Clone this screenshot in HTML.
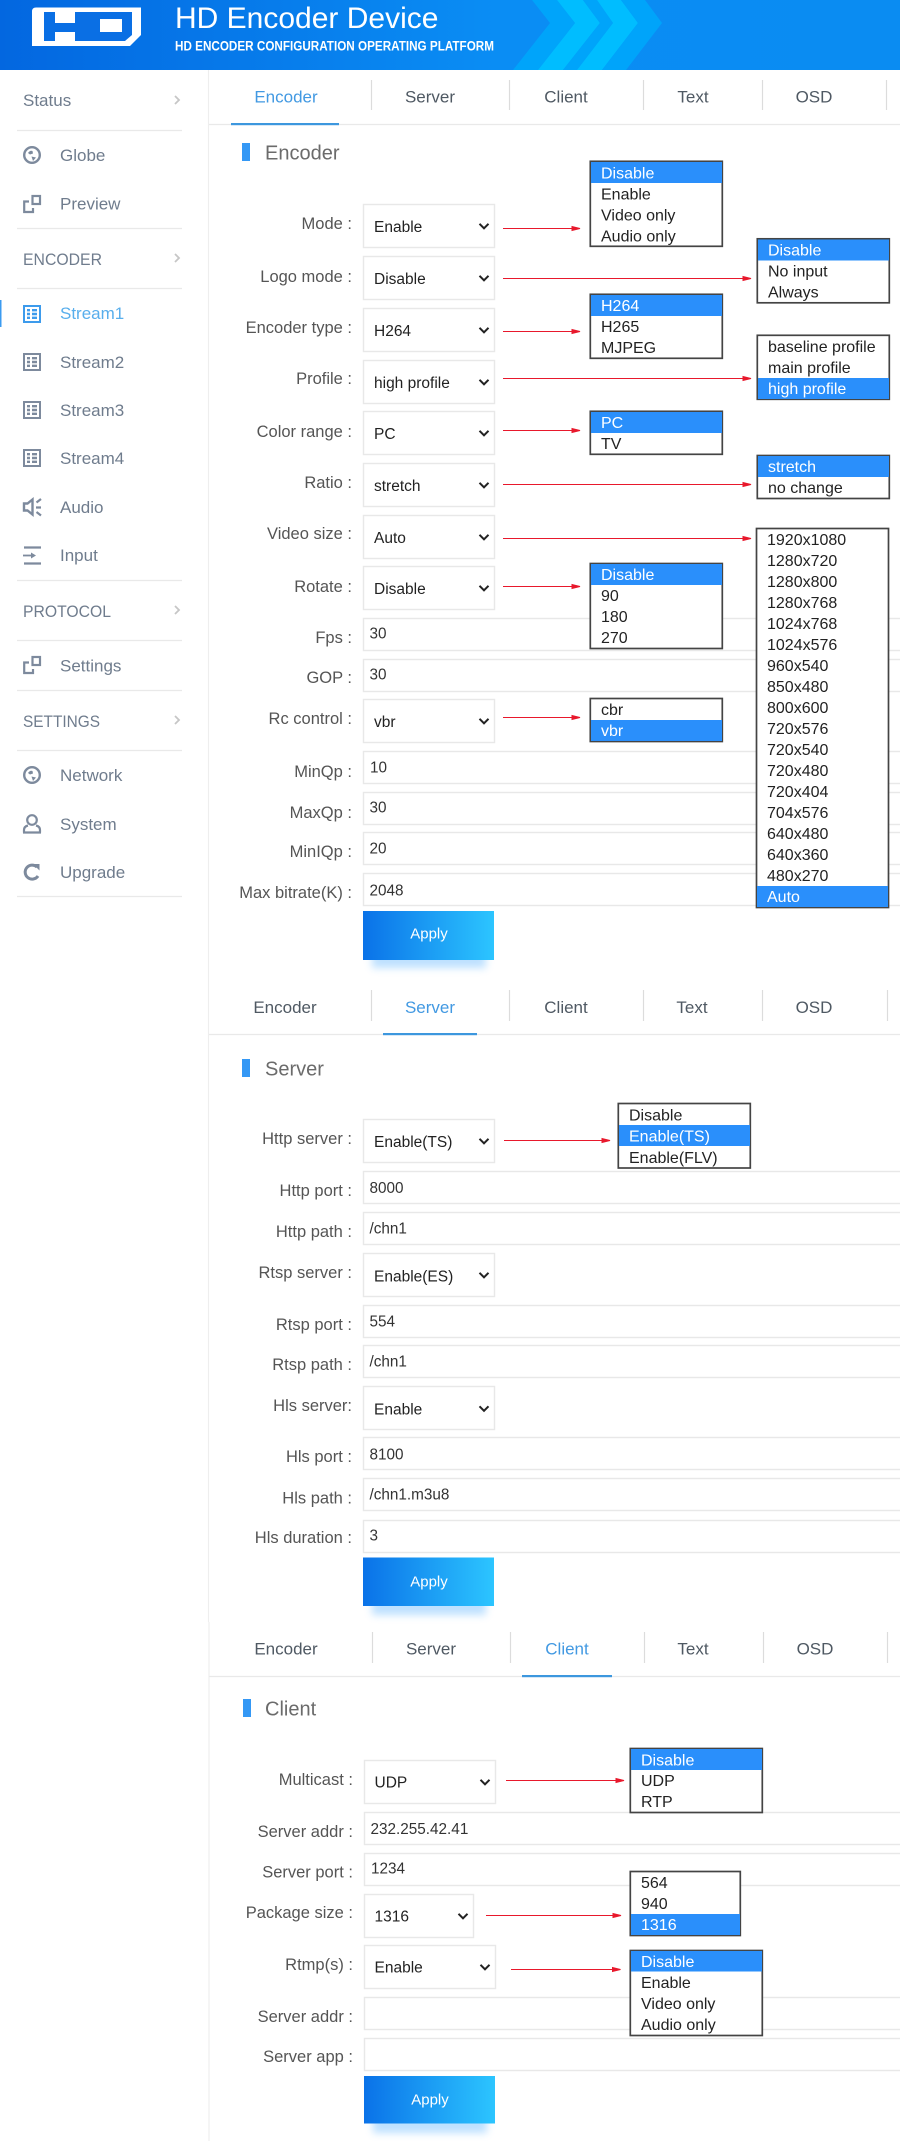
<!DOCTYPE html>
<html lang="en"><head><meta charset="utf-8"><title>HD Encoder Device</title>
<style>
html,body{margin:0;padding:0;background:#fff}
svg{display:block}
text{font-family:"Liberation Sans",Arial,sans-serif}
.s{font-size:17px;fill:#6f7c8d}
.a{font-size:17px;fill:#58aeec}
.tab{font-size:17px;fill:#4f5963;text-anchor:middle}
.tabA{font-size:17px;fill:#4299e2;text-anchor:middle}
.h{font-size:20px;fill:#6b6b6b}
.l{font-size:16.5px;fill:#555;text-anchor:end}
.v{font-size:15.5px;fill:#222}
.i{font-size:15.3px;fill:#333}
.d{font-size:16px;fill:#222}
.w{font-size:16px;fill:#fff}
.ap{font-size:15px;fill:#fff;text-anchor:middle}
.sel{fill:#fff;stroke:#e8e8e8;stroke-width:1.4}
.dd{fill:#fff;stroke:#444;stroke-width:1.7}
.hl{fill:#2a8ffb}
.ar{fill:#e8182c;stroke:#e8182c;stroke-width:1}
.ln{stroke:#e9e9e9;stroke-width:1.2}
.sp{stroke:#dcdcdc;stroke-width:1.2}
</style></head><body>
<svg xmlns="http://www.w3.org/2000/svg" width="900" height="2141" viewBox="0 0 900 2141">
<defs>
<linearGradient id="hd" x1="0" x2="1" y1="0" y2="0"><stop offset="0" stop-color="#0367e0"/><stop offset=".55" stop-color="#0a8df4"/><stop offset="1" stop-color="#0a8cf2"/></linearGradient>
<linearGradient id="bt" x1="0" x2="1" y1="0" y2="0"><stop offset="0" stop-color="#0a72e8"/><stop offset="1" stop-color="#2cc5ff"/></linearGradient>
<filter id="bl" x="-30%" y="-100%" width="160%" height="300%"><feGaussianBlur stdDeviation="4"/></filter>
<path id="c" d="M-4.5-2.2 0 2.3 4.5-2.2" fill="none" stroke="#222" stroke-width="2"/>
<path id="m" d="M-2-4 2 0-2 4" fill="none" stroke="#c6c6c6" stroke-width="1.8"/>
<g id="st"><rect x="0" y="0" width="18" height="18" fill="currentColor"/><rect x="2" y="2" width="14" height="14" fill="#fff"/>
<path d="M4 4h3v2.400H4zM4 7.800h3v2.400H4zM4 11.600h3V14H4zM9 4h5v2.400H9zM9 7.800h5v2.400H9zM9 11.600h5V14H9z" fill="currentColor"/></g>
<g id="gl"><circle cx="9" cy="9" r="7.800" fill="none" stroke="#7d8a9d" stroke-width="2.400"/><path d="M5 7q2-3 4.500-2l.5 2.500-3 1zM8.500 10.500l4.500 1-3 3.500z" fill="#7d8a9d"/></g>
<g id="pv" fill="none" stroke="#7d8a9d" stroke-width="2.200"><rect x="9.500" y="1" width="7.500" height="8"/><path d="M6 6.500H1.200V17H10v-4"/></g>
</defs>

<!-- header -->
<rect width="900" height="70" fill="url(#hd)"/>
<path d="M532 0H557L575 23 538 70H513L550 23z" fill="#00a4fa"/>
<path d="M557 0H583L600 23 563 70H538L575 23z" fill="#00bdff"/>
<path d="M583 0H597L613 23 577 70H563L600 23z" fill="#00a4fa"/>
<path d="M597 0H621L638 23 602 70H577L613 23z" fill="#00bdff"/>
<path d="M621 0H645L662 23 626 70H602L638 23z" fill="#00a4fa"/>
<path d="M36 7.500H141V35L130 46H32V11.500Q32 7.500 36 7.500z" fill="#fff"/>
<path fill="#0a6fe4" fill-rule="evenodd" d="M44 12H55V23H75V12H132V35L125 41H75V32H55V41H44zM100 19V32H122V19z"/>
<text x="175" y="28" font-size="30" fill="#fff">HD Encoder Device</text>
<text x="175" y="50.500" font-size="13.500" font-weight="bold" fill="#fff" textLength="319" lengthAdjust="spacingAndGlyphs">HD ENCODER CONFIGURATION OPERATING PLATFORM</text>

<!-- sidebar -->
<path d="M208.500 70V1622M209 1622V2141" stroke="#eee" stroke-width="1.200"/>
<rect x="0" y="300" width="1.500" height="27" fill="#3b9bf0"/>
<path class="ln" d="M17 130.500H182M17 228.500H182M17 288.500H182M17 580.500H182M17 640.500H182M17 690.500H182M17 750.500H182M17 896.500H182"/>
<text class="s" x="23" y="106">Status</text>
<text class="s" x="60" y="161">Globe</text>
<text class="s" x="60" y="209.500">Preview</text>
<text class="s" x="23" y="265" textLength="79" lengthAdjust="spacingAndGlyphs">ENCODER</text>
<text class="a" x="60" y="319">Stream1</text>
<text class="s" x="60" y="368">Stream2</text>
<text class="s" x="60" y="416">Stream3</text>
<text class="s" x="60" y="464">Stream4</text>
<text class="s" x="60" y="513">Audio</text>
<text class="s" x="60" y="561">Input</text>
<text class="s" x="23" y="617" textLength="88" lengthAdjust="spacingAndGlyphs">PROTOCOL</text>
<text class="s" x="60" y="671.500">Settings</text>
<text class="s" x="23" y="727" textLength="77" lengthAdjust="spacingAndGlyphs">SETTINGS</text>
<text class="s" x="60" y="781">Network</text>
<text class="s" x="60" y="830">System</text>
<text class="s" x="60" y="878">Upgrade</text>
<use href="#m" x="177" y="100"/><use href="#m" x="177" y="258"/><use href="#m" x="177" y="610"/><use href="#m" x="177" y="720"/>
<use href="#gl" x="23" y="146"/>
<use href="#pv" x="23" y="195"/>
<use href="#st" x="23" y="305" color="#3d9bec"/>
<use href="#st" x="23" y="353" color="#7d8a9d"/>
<use href="#st" x="23" y="401" color="#7d8a9d"/>
<use href="#st" x="23" y="449" color="#7d8a9d"/>
<path d="M24 503.500h3.500l5-4v15l-5-4H24z" fill="#fff" stroke="#7d8a9d" stroke-width="2.400"/>
<path d="M41 499l-4.500 3.500M36 507.500h5M36.500 512l4.500 3.500" stroke="#7d8a9d" stroke-width="2.200" fill="none"/>
<path d="M24 547.500h17M24 563.500h17" stroke="#7d8a9d" stroke-width="2.200"/>
<path d="M23 555.500h10" stroke="#7d8a9d" stroke-width="1.800"/><path d="M36 555.500l-5-3v6z" fill="#7d8a9d"/>
<use href="#pv" x="23" y="656"/>
<use href="#gl" x="23" y="766"/>
<circle cx="32" cy="820" r="4.800" fill="none" stroke="#7d8a9d" stroke-width="2.200"/>
<path d="M24 832.500v-2.500q0-3.500 4-4.500M40 832.500v-2.500q0-3.500-4-4.500M23 832.500h18" fill="none" stroke="#7d8a9d" stroke-width="2.200"/>
<path d="M37 867a7 7 0 1 0 1 9" fill="none" stroke="#7d8a9d" stroke-width="3"/><path d="M33 864h6.500v6.500z" fill="#7d8a9d"/>

<!-- section 1 tabs -->
<path class="sp" d="M371.500 80V110M509.500 80V110M643.500 80V110M762.500 80V110M886.500 80V110"/>
<path class="ln" d="M209 124.500H900"/>
<rect x="231" y="123" width="108" height="2.200" fill="#3d97de"/>
<text class="tabA" x="286" y="102.500">Encoder</text><text class="tab" x="430" y="102.500">Server</text><text class="tab" x="566" y="102.500">Client</text><text class="tab" x="693" y="102.500">Text</text><text class="tab" x="814" y="102.500">OSD</text>
<rect x="242" y="143" width="8" height="18" fill="#3498f5"/>
<text class="h" x="265" y="159.500">Encoder</text>

<text class="l" x="352" y="229">Mode :</text>
<text class="l" x="352" y="282">Logo mode :</text>
<text class="l" x="352" y="333">Encoder type :</text>
<text class="l" x="352" y="384">Profile :</text>
<text class="l" x="352" y="437">Color range :</text>
<text class="l" x="352" y="488">Ratio :</text>
<text class="l" x="352" y="539">Video size :</text>
<text class="l" x="352" y="592">Rotate :</text>
<text class="l" x="352" y="643">Fps :</text>
<text class="l" x="352" y="683">GOP :</text>
<text class="l" x="352" y="724">Rc control :</text>
<text class="l" x="352" y="777">MinQp :</text>
<text class="l" x="352" y="818">MaxQp :</text>
<text class="l" x="352" y="857">MinIQp :</text>
<text class="l" x="352" y="898">Max bitrate(K) :</text>

<rect class="sel" x="363.500" y="204.500" width="131" height="43"/>
<rect class="sel" x="363.500" y="256.500" width="131" height="43"/>
<rect class="sel" x="363.500" y="308.500" width="131" height="43"/>
<rect class="sel" x="363.500" y="360.500" width="131" height="43"/>
<rect class="sel" x="363.500" y="411.500" width="131" height="43"/>
<rect class="sel" x="363.500" y="463.500" width="131" height="43"/>
<rect class="sel" x="363.500" y="515.500" width="131" height="43"/>
<rect class="sel" x="363.500" y="566.500" width="131" height="43"/>
<rect class="sel" x="363.500" y="699.500" width="131" height="43"/>
<rect class="sel" x="363.500" y="618.500" width="600" height="32"/>
<rect class="sel" x="363.500" y="659.500" width="600" height="32"/>
<rect class="sel" x="363.500" y="751.500" width="600" height="32"/>
<rect class="sel" x="363.500" y="792.500" width="600" height="32"/>
<rect class="sel" x="363.500" y="832.500" width="600" height="32"/>
<rect class="sel" x="363.500" y="873.500" width="600" height="32"/>

<text class="v" x="374" y="232">Enable</text>
<text class="v" x="374" y="284">Disable</text>
<text class="v" x="374" y="336">H264</text>
<text class="v" x="374" y="388">high profile</text>
<text class="v" x="374" y="439">PC</text>
<text class="v" x="374" y="491">stretch</text>
<text class="v" x="374" y="543">Auto</text>
<text class="v" x="374" y="594">Disable</text>
<text class="v" x="374" y="727">vbr</text>
<use href="#c" x="484" y="226"/><use href="#c" x="484" y="278"/><use href="#c" x="484" y="330"/><use href="#c" x="484" y="382"/><use href="#c" x="484" y="433"/><use href="#c" x="484" y="485"/><use href="#c" x="484" y="537"/><use href="#c" x="484" y="588"/><use href="#c" x="484" y="721"/>
<text class="i" x="369.500" y="638.500">30</text>
<text class="i" x="369.500" y="679.500">30</text>
<text class="i" x="370" y="772.500">10</text>
<text class="i" x="369.500" y="812.500">30</text>
<text class="i" x="369.500" y="853.500">20</text>
<text class="i" x="369.500" y="895.500">2048</text>

<rect x="372" y="948" width="114" height="20" fill="#5db4ff" opacity=".4" filter="url(#bl)"/>
<rect x="363" y="911" width="131" height="49" fill="url(#bt)"/>
<text class="ap" x="429" y="938.500">Apply</text>

<path class="ar" d="M503 228.500H580m0 0l-8-2v4z"/>
<path class="ar" d="M503 278.500H751m0 0l-8-2v4z"/>
<path class="ar" d="M503 331.500H580m0 0l-8-2v4z"/>
<path class="ar" d="M503 378.500H751m0 0l-8-2v4z"/>
<path class="ar" d="M503 430.500H580m0 0l-8-2v4z"/>
<path class="ar" d="M503 484.500H751m0 0l-8-2v4z"/>
<path class="ar" d="M503 538.500H751m0 0l-8-2v4z"/>
<path class="ar" d="M503 586.500H580m0 0l-8-2v4z"/>
<path class="ar" d="M503 717.500H580m0 0l-8-2v4z"/>

<!-- dropdowns section 1 -->
<rect class="dd" x="590.300" y="161.300" width="132" height="85"/><rect class="hl" x="591" y="162" width="131" height="21"/>
<text class="w" x="601" y="178.500">Disable</text><text class="d" x="601" y="199.500">Enable</text><text class="d" x="601" y="220.500">Video only</text><text class="d" x="601" y="241.500">Audio only</text>

<rect class="dd" x="757.300" y="238.800" width="132" height="64"/><rect class="hl" x="758" y="239.500" width="131" height="21"/>
<text class="w" x="768" y="255.500">Disable</text><text class="d" x="768" y="276.500">No input</text><text class="d" x="768" y="297.500">Always</text>

<rect class="dd" x="590.300" y="294.300" width="132" height="64"/><rect class="hl" x="591" y="295" width="131" height="21"/>
<text class="w" x="601" y="311">H264</text><text class="d" x="601" y="332">H265</text><text class="d" x="601" y="353">MJPEG</text>

<rect class="dd" x="757.300" y="335.300" width="132" height="64"/><rect class="hl" x="758" y="378" width="131" height="21"/>
<text class="d" x="768" y="352">baseline profile</text><text class="d" x="768" y="373">main profile</text><text class="w" x="768" y="394">high profile</text>

<rect class="dd" x="590.300" y="411.300" width="132" height="43"/><rect class="hl" x="591" y="412" width="131" height="21"/>
<text class="w" x="601" y="428">PC</text><text class="d" x="601" y="449">TV</text>

<rect class="dd" x="757.300" y="455.500" width="132" height="43"/><rect class="hl" x="758" y="456" width="131" height="21"/>
<text class="w" x="768" y="472">stretch</text><text class="d" x="768" y="493">no change</text>

<rect class="dd" x="756.500" y="528.500" width="132" height="379"/><rect class="hl" x="757" y="886" width="131" height="21"/>
<text class="d" x="767" y="545">1920x1080</text><text class="d" x="767" y="566">1280x720</text><text class="d" x="767" y="587">1280x800</text><text class="d" x="767" y="608">1280x768</text><text class="d" x="767" y="629">1024x768</text><text class="d" x="767" y="650">1024x576</text><text class="d" x="767" y="671">960x540</text><text class="d" x="767" y="692">850x480</text><text class="d" x="767" y="713">800x600</text><text class="d" x="767" y="734">720x576</text><text class="d" x="767" y="755">720x540</text><text class="d" x="767" y="776">720x480</text><text class="d" x="767" y="797">720x404</text><text class="d" x="767" y="818">704x576</text><text class="d" x="767" y="839">640x480</text><text class="d" x="767" y="860">640x360</text><text class="d" x="767" y="881">480x270</text><text class="w" x="767" y="902">Auto</text>

<rect class="dd" x="590.300" y="563.500" width="132" height="85"/><rect class="hl" x="591" y="564" width="131" height="21"/>
<text class="w" x="601" y="580">Disable</text><text class="d" x="601" y="601">90</text><text class="d" x="601" y="622">180</text><text class="d" x="601" y="643">270</text>

<rect class="dd" x="590.300" y="698.500" width="132" height="43"/><rect class="hl" x="591" y="720" width="131" height="21"/>
<text class="d" x="601" y="715">cbr</text><text class="w" x="601" y="736">vbr</text>

<!-- section 2 -->
<path class="sp" d="M371.500 990V1021M509.500 990V1021M643.500 990V1021M762.500 990V1021M887.500 990V1021"/>
<path class="ln" d="M209 1034.500H900"/>
<rect x="383" y="1033" width="94" height="2.200" fill="#3d97de"/>
<text class="tab" x="285" y="1013">Encoder</text><text class="tabA" x="430" y="1013">Server</text><text class="tab" x="566" y="1013">Client</text><text class="tab" x="692" y="1013">Text</text><text class="tab" x="814" y="1013">OSD</text>
<rect x="242" y="1059" width="8" height="18" fill="#3498f5"/>
<text class="h" x="265" y="1075.500">Server</text>

<text class="l" x="352" y="1144">Http server :</text>
<text class="l" x="352" y="1196">Http port :</text>
<text class="l" x="352" y="1237">Http path :</text>
<text class="l" x="352" y="1278">Rtsp server :</text>
<text class="l" x="352" y="1330">Rtsp port :</text>
<text class="l" x="352" y="1370">Rtsp path :</text>
<text class="l" x="352" y="1411">Hls server:</text>
<text class="l" x="352" y="1462">Hls port :</text>
<text class="l" x="352" y="1503.500">Hls path :</text>
<text class="l" x="352" y="1543">Hls duration :</text>

<rect class="sel" x="363.500" y="1119.500" width="131" height="43"/>
<rect class="sel" x="363.500" y="1253.500" width="131" height="43"/>
<rect class="sel" x="363.500" y="1386.500" width="131" height="43"/>
<rect class="sel" x="363.500" y="1171.500" width="600" height="32"/>
<rect class="sel" x="363.500" y="1212.500" width="600" height="32"/>
<rect class="sel" x="363.500" y="1305.500" width="600" height="32"/>
<rect class="sel" x="363.500" y="1345.500" width="600" height="32"/>
<rect class="sel" x="363.500" y="1437.500" width="600" height="32"/>
<rect class="sel" x="363.500" y="1478.500" width="600" height="32"/>
<rect class="sel" x="363.500" y="1520.500" width="600" height="32"/>
<text class="v" x="374" y="1147">Enable(TS)</text>
<text class="v" x="374" y="1281.500">Enable(ES)</text>
<text class="v" x="374" y="1414.500">Enable</text>
<use href="#c" x="484" y="1141"/><use href="#c" x="484" y="1275"/><use href="#c" x="484" y="1408.500"/>
<text class="i" x="369.500" y="1193">8000</text>
<text class="i" x="369.500" y="1233.500">/chn1</text>
<text class="i" x="369.500" y="1326.500">554</text>
<text class="i" x="369.500" y="1366.500">/chn1</text>
<text class="i" x="369.500" y="1459.500">8100</text>
<text class="i" x="369.500" y="1499.500">/chn1.m3u8</text>
<text class="i" x="369.500" y="1540.500">3</text>

<rect x="372" y="1595" width="114" height="20" fill="#5db4ff" opacity=".4" filter="url(#bl)"/>
<rect x="363" y="1557.500" width="131" height="48.500" fill="url(#bt)"/>
<text class="ap" x="429" y="1586.500">Apply</text>

<path class="ar" d="M504 1140.500H610m0 0l-8-2v4z"/>
<rect class="dd" x="618.300" y="1103.500" width="132" height="64.500"/><rect class="hl" x="619" y="1125" width="131" height="21"/>
<text class="d" x="629" y="1120.500">Disable</text><text class="w" x="629" y="1141.700">Enable(TS)</text><text class="d" x="629" y="1163">Enable(FLV)</text>

<!-- section 3 -->
<path class="sp" d="M372.500 1632V1663M510.500 1632V1663M644.500 1632V1663M763.500 1632V1663M887.500 1632V1663"/>
<path class="ln" d="M209 1676.500H900"/>
<rect x="522" y="1675" width="90" height="2.200" fill="#3d97de"/>
<text class="tab" x="286" y="1654.500">Encoder</text><text class="tab" x="431" y="1654.500">Server</text><text class="tabA" x="567" y="1654.500">Client</text><text class="tab" x="693" y="1654.500">Text</text><text class="tab" x="815" y="1654.500">OSD</text>
<rect x="243" y="1699" width="8" height="18" fill="#3498f5"/>
<text class="h" x="265" y="1715.500">Client</text>

<text class="l" x="353" y="1785">Multicast :</text>
<text class="l" x="353" y="1837">Server addr :</text>
<text class="l" x="353" y="1877.500">Server port :</text>
<text class="l" x="353" y="1918">Package size :</text>
<text class="l" x="353" y="1970">Rtmp(s) :</text>
<text class="l" x="353" y="2022">Server addr :</text>
<text class="l" x="353" y="2062">Server app :</text>

<rect class="sel" x="364.500" y="1760.500" width="131" height="43"/>
<rect class="sel" x="364.500" y="1894.500" width="109" height="43"/>
<rect class="sel" x="364.500" y="1945.500" width="131" height="43"/>
<rect class="sel" x="364.500" y="1812.500" width="600" height="32"/>
<rect class="sel" x="364.500" y="1853.500" width="600" height="32"/>
<rect class="sel" x="364.500" y="1997.500" width="600" height="32"/>
<rect class="sel" x="364.500" y="2038.500" width="600" height="32"/>
<text class="v" x="374.500" y="1787.500">UDP</text>
<text class="v" x="374.500" y="1921.500">1316</text>
<text class="v" x="374.500" y="1972.500">Enable</text>
<use href="#c" x="485" y="1782"/><use href="#c" x="463" y="1916"/><use href="#c" x="485" y="1967"/>
<text class="i" x="370.500" y="1834">232.255.42.41</text>
<text class="i" x="371" y="1873.500">1234</text>

<rect x="373" y="2113" width="114" height="20" fill="#5db4ff" opacity=".4" filter="url(#bl)"/>
<rect x="364" y="2076" width="131" height="47.500" fill="url(#bt)"/>
<text class="ap" x="430" y="2104.500">Apply</text>

<path class="ar" d="M506 1780.500H624m0 0l-8-2v4z"/>
<path class="ar" d="M486 1915.500H621m0 0l-8-2v4z"/>
<path class="ar" d="M511 1969.500H620.500m0 0l-8-2v4z"/>

<rect class="dd" x="630.300" y="1748.500" width="132" height="64"/><rect class="hl" x="631" y="1749" width="131" height="21"/>
<text class="w" x="641" y="1765.500">Disable</text><text class="d" x="641" y="1786">UDP</text><text class="d" x="641" y="1807">RTP</text>

<rect class="dd" x="630.300" y="1871.500" width="110" height="64"/><rect class="hl" x="631" y="1914" width="109" height="21"/>
<text class="d" x="641" y="1888">564</text><text class="d" x="641" y="1909">940</text><text class="w" x="641" y="1930">1316</text>

<rect class="dd" x="630.300" y="1950.500" width="132" height="85"/><rect class="hl" x="631" y="1951" width="131" height="20.500"/>
<text class="w" x="641" y="1967">Disable</text><text class="d" x="641" y="1988">Enable</text><text class="d" x="641" y="2009">Video only</text><text class="d" x="641" y="2030">Audio only</text>
</svg>
</body></html>
